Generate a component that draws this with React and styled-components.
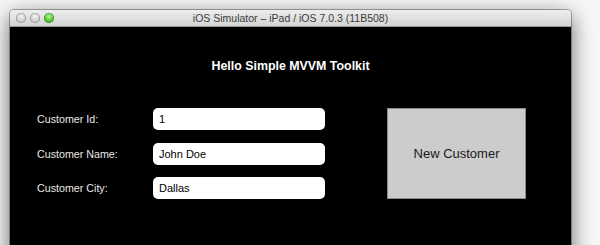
import React from "react";
import styled, { createGlobalStyle } from "styled-components";

const GlobalStyle = createGlobalStyle`
  html, body {
    margin: 0;
    padding: 0;
    background: #f6f6f6;
    font-family: "Liberation Sans", Arial, sans-serif;
  }
`;

const Page = styled.div`
  width: 600px;
  height: 245px;
  overflow: hidden;
  padding: 10px 0 0 10px;
  box-sizing: border-box;
  background: #f7f7f7;
`;

const Window = styled.div`
  width: 561px;
  height: 260px;
  display: flex;
  flex-direction: column;
  border-radius: 4px 4px 0 0;
  box-shadow: 0 6px 22px rgba(0, 0, 0, 0.6), 0 0 0 1px rgba(0, 0, 0, 0.3);
  overflow: hidden;
`;

const TitleBar = styled.div`
  height: 16px;
  position: relative;
  display: flex;
  align-items: center;
  justify-content: center;
  background: linear-gradient(to bottom, #eeeeee, #d4d4d4);
  border-bottom: 1px solid #9a9a9a;
  font-size: 10.5px;
  color: #3a3a3a;
`;

const Lights = styled.div`
  position: absolute;
  left: 6px;
  top: 3px;
  display: flex;
  gap: 4px;
`;

const Light = styled.span`
  width: 10px;
  height: 10px;
  border-radius: 50%;
  background: ${(p) =>
    p.$active
      ? "radial-gradient(circle at 50% 35%, #b6f59a, #4fbf2a 60%, #2e8a17)"
      : "radial-gradient(circle at 50% 35%, #f4f4f4, #cbcbcb 60%, #a8a8a8)"};
  box-shadow: inset 0 0 0 0.5px rgba(0, 0, 0, 0.35);
`;

const Content = styled.div`
  flex: 1;
  background: #000;
  display: flex;
  flex-direction: column;
  padding-top: 31px;
`;

const Heading = styled.div`
  color: #fff;
  font-weight: bold;
  font-size: 12.4px;
  line-height: 16px;
  text-align: center;
`;

const Body = styled.div`
  display: flex;
  align-items: flex-start;
  margin-top: 34px;
  padding-left: 27px;
`;

const Form = styled.div`
  display: flex;
  flex-direction: column;
  gap: 12.5px;
  width: 288px;
`;

const Row = styled.div`
  display: flex;
  align-items: center;
  height: 22px;
`;

const Label = styled.span`
  width: 116px;
  color: #e8e8e8;
  font-size: 10.7px;
`;

const Field = styled.div`
  width: 172px;
  height: 22px;
  box-sizing: border-box;
  background: #fff;
  border-radius: 5px;
  padding-left: 6px;
  display: flex;
  align-items: center;
  font-size: 11px;
  color: #000;
`;

const NewButton = styled.div`
  margin-left: 62px;
  width: 139px;
  height: 91px;
  box-sizing: border-box;
  background: #cccccc;
  border: 1px solid #8a8a8a;
  display: flex;
  align-items: center;
  justify-content: center;
  font-size: 13px;
  color: #1a1a1a;
`;

const rows = [
  { label: "Customer Id:", value: "1" },
  { label: "Customer Name:", value: "John Doe" },
  { label: "Customer City:", value: "Dallas" },
];

const App = () => {
  return (
    <Page>
      <GlobalStyle />
      <Window>
        <TitleBar>
          <Lights>
            <Light />
            <Light />
            <Light $active />
          </Lights>
          iOS Simulator – iPad / iOS 7.0.3 (11B508)
        </TitleBar>
        <Content>
          <Heading>Hello Simple MVVM Toolkit</Heading>
          <Body>
            <Form>
              {rows.map((r) => (
                <Row key={r.label}>
                  <Label>{r.label}</Label>
                  <Field>{r.value}</Field>
                </Row>
              ))}
            </Form>
            <NewButton>New Customer</NewButton>
          </Body>
        </Content>
      </Window>
    </Page>
  );
};

export default App;
